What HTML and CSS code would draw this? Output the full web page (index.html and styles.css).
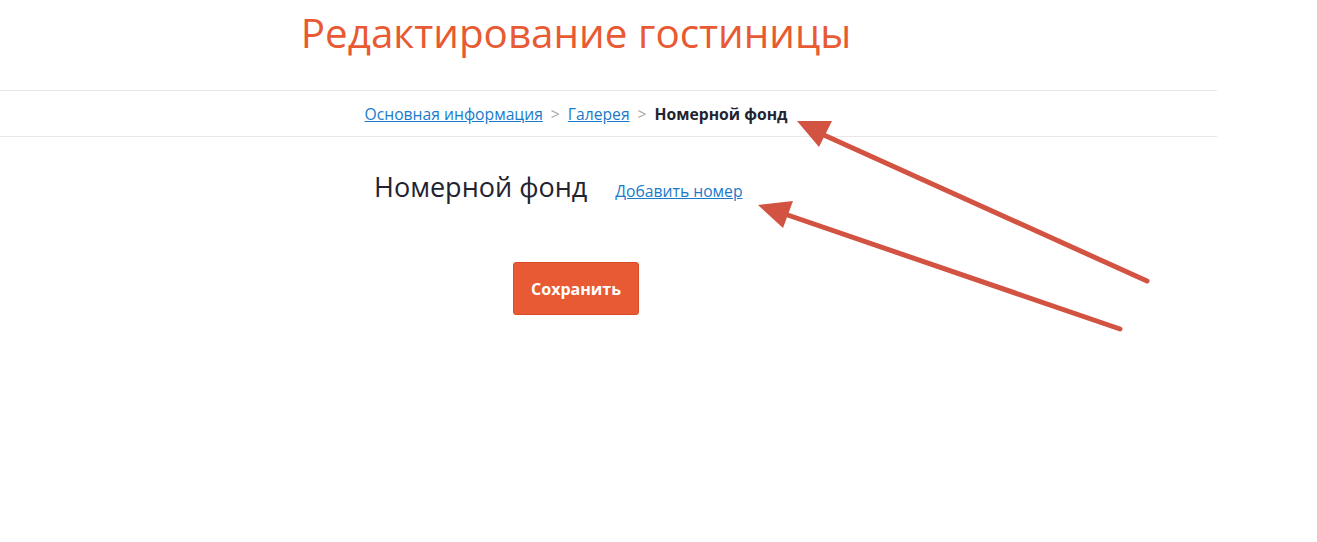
FILE: index.html
```html
<!DOCTYPE html>
<html lang="ru">
<head>
  <meta charset="UTF-8">
  <meta name="viewport" content="width=device-width, initial-scale=1.0">
  <title>Редактирование гостиницы</title>
  <link rel="stylesheet" href="styles.css">
</head>
<body>

  <div class="page">
    <!-- Page title -->
    <h1 class="title">Редактирование гостиницы</h1>

    <!-- Steps -->
    <div class="crumbs">
      <div class="crumbs-inner">
        <a href="#">Основная информация</a>
        <span class="sep">&gt;</span>
        <a href="#">Галерея</a>
        <span class="sep">&gt;</span>
        <span class="current">Номерной фонд</span>
      </div>
    </div>

    <!-- Rooms -->
    <div class="rooms-head">
      <h2>Номерной фонд</h2>
      <a href="#" class="add-link">Добавить номер</a>
    </div>

    <div class="actions">
      <button class="save-button">Сохранить</button>
    </div>
  </div>

  <!-- Annotation arrows -->
  <svg class="arrows" width="1317" height="542" viewBox="0 0 1317 542">
    <g stroke="#d25342" stroke-width="5" stroke-linecap="round" fill="#d25342">
      <line x1="1147" y1="281" x2="815" y2="131"/>
      <line x1="1120" y1="329" x2="776" y2="211"/>
    </g>
    <g fill="#d25342">
      <polygon points="797,121 832,121 819,147"/>
      <polygon points="758,205 793,201 783,228"/>
    </g>
  </svg>

</body>
</html>
```

FILE: styles.css
```css
* {
  margin: 0;
  padding: 0;
  box-sizing: border-box;
}
body {
  font-family: 'Open Sans', sans-serif;
  background-color: #fff;
  color: #23232f;
}
.page {
  width: 1217px;
}
.title {
  width: 1152px;
  padding-top: 6px;
  font-size: 40.4px;
  line-height: 54px;
  font-weight: normal;
  color: #e85a33;
  text-align: center;
}
.crumbs {
  margin-top: 30px;
  border-top: 1px solid #e8e8e8;
  border-bottom: 1px solid #e8e8e8;
  height: 47px;
}
.crumbs-inner {
  width: 1152px;
  display: flex;
  justify-content: center;
  align-items: center;
  gap: 8px;
  height: 45px;
  font-size: 15.7px;
}
.crumbs a {
  color: #1a7bcb;
}
.crumbs .sep {
  color: #a8a8a8;
}
.crumbs .current {
  font-weight: bold;
  color: #23232f;
}
.rooms-head {
  display: flex;
  align-items: baseline;
  gap: 28px;
  padding-left: 374px;
  margin-top: 31px;
}
.rooms-head h2 {
  font-size: 27px;
  font-weight: normal;
  color: #23232f;
}
.add-link {
  font-size: 15.7px;
  color: #1a7bcb;
}
.actions {
  width: 1152px;
  display: flex;
  justify-content: center;
  margin-top: 57px;
}
.save-button {
  width: 126px;
  height: 53px;
  font-family: 'Open Sans', sans-serif;
  font-size: 16px;
  font-weight: bold;
  color: #fff;
  background-color: #e85a33;
  border: 1px solid #d94c26;
  border-radius: 3px;
  cursor: pointer;
}
.arrows {
  position: absolute;
  left: 0;
  top: 0;
  pointer-events: none;
}
```
